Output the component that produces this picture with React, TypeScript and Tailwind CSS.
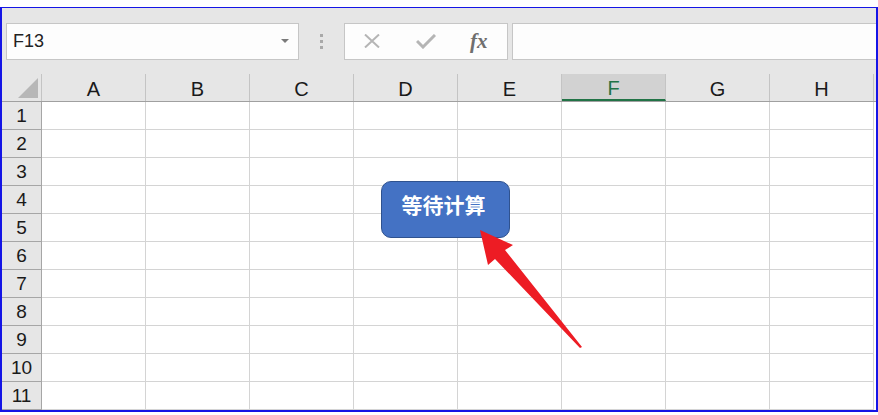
import React from 'react';

const columns = ['A', 'B', 'C', 'D', 'E', 'F', 'G', 'H'];
const rows = Array.from({ length: 11 }, (_, i) => i + 1);

const FormulaBar: React.FC = () => (
  <div className="flex h-[66px] items-center bg-[#e6e6e6]">
    {/* name box */}
    <div className="ml-[4px] flex h-[37px] w-[293px] items-center justify-between border border-[#c6c6c6] bg-[#fdfdfd] pl-[6px] pr-[9px]">
      <span className="text-[18px] leading-none text-[#222]">F13</span>
      <svg width="8" height="5" viewBox="0 0 8 5">
        <polygon points="0,0 8,0 4,4" fill="#7a7a7a" />
      </svg>
    </div>

    {/* grip */}
    <div className="ml-[21px] flex flex-col gap-[3px]">
      <span className="h-[3px] w-[3px] bg-[#a9a9a9]" />
      <span className="h-[3px] w-[3px] bg-[#a9a9a9]" />
      <span className="h-[3px] w-[3px] bg-[#a9a9a9]" />
    </div>

    {/* cancel / enter / fx */}
    <div className="ml-[21px] flex h-[37px] w-[164px] items-center border border-[#c6c6c6] bg-[#fdfdfd]">
      <svg className="ml-[18px]" width="18" height="14" viewBox="0 0 18 14">
        <path d="M2 0.5 L16 13.5 M16 0.5 L2 13.5" stroke="#b5b5b5" strokeWidth="2" fill="none" />
      </svg>
      <svg className="ml-[35px]" width="20" height="15" viewBox="0 0 20 15">
        <path d="M1 7 L7 13 L19 1" stroke="#b5b5b5" strokeWidth="3" fill="none" />
      </svg>
      <span className="ml-[34px] font-['Liberation_Serif',serif] text-[21px] font-bold italic leading-none text-[#6f6f6f]">
        fx
      </span>
    </div>

    {/* formula input */}
    <div className="ml-[4px] h-[37px] flex-1 border-y border-l border-[#c6c6c6] bg-[#fdfdfd]" />
  </div>
);

const ColumnHeader: React.FC = () => (
  <div className="flex h-[28px] border-b border-[#a0a0a0] bg-[#e6e6e6]">
    <div className="flex w-[40px] items-end justify-end border-r border-[#c4c4c4] pb-[3px] pr-[3px]">
      <svg width="20" height="20" viewBox="0 0 20 20">
        <polygon points="20,0 20,20 0,20" fill="#b7b7b7" />
      </svg>
    </div>
    {columns.map((c) => (
      <div
        key={c}
        className={`flex w-[104px] items-center justify-center border-r pt-[2px] text-[20px] leading-none ${
          c === 'F'
            ? 'border-b-2 border-r-[#c4c4c4] border-b-[#217346] bg-[#d2d2d2] text-[#217346]'
            : 'border-[#c4c4c4] text-[#1a1a1a]'
        }`}
      >
        {c}
      </div>
    ))}
  </div>
);

const Row: React.FC<{ n: number }> = ({ n }) => (
  <div className="flex h-[28px]">
    <div className="flex w-[40px] items-center justify-center border-b border-r border-[#a6a6a6] bg-[#e6e6e6] text-[19px] leading-none text-[#1a1a1a]">
      {n}
    </div>
    {columns.map((c) => (
      <div key={c} className="w-[104px] border-b border-r border-[#d4d4d4]" />
    ))}
  </div>
);

export default function App() {
  return (
    <div className="relative h-[415px] w-[878px] overflow-hidden bg-white font-['Liberation_Sans',Arial,sans-serif]">
      <div className="mt-[7px] h-[405px] w-[878px] border-x-2 border-b-2 border-t border-[#1515e6]">
        <FormulaBar />
        <ColumnHeader />
        {rows.map((n) => (
          <Row key={n} n={n} />
        ))}
      </div>

      {/* shape */}
      <div className="absolute left-[381px] top-[181px] flex h-[57px] w-[129px] items-start justify-center rounded-[10px] border-[1.5px] border-[#2f528f] bg-[#4472c4] pr-[4px] pt-[12px]">
        <span className="font-['Noto_Sans_CJK_SC',sans-serif] text-[21px] font-bold leading-none text-white">
          等待计算
        </span>
      </div>

      {/* arrow */}
      <svg className="pointer-events-none absolute left-0 top-0" width="878" height="415" viewBox="0 0 878 415">
        <polygon
          points="480,230 513,245 505,250 582,347 580,348 495,259 488,265"
          fill="#ed1c24"
        />
      </svg>
    </div>
  );
}
